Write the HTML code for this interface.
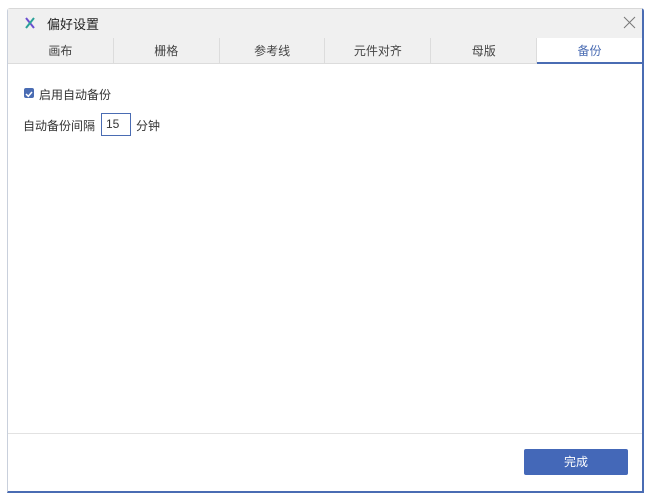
<!DOCTYPE html>
<html><head><meta charset="utf-8"><style>
body{margin:0;width:650px;height:495px;background:#fff;font-family:"Liberation Sans","Noto Sans CJK SC",sans-serif;font-size:12px;color:#333;position:relative;overflow:hidden}
.dlg{position:absolute;left:7px;top:8px;width:634px;height:482px;border-left:1px solid #c9d0dc;border-top:1px solid #d8d8d8;border-right:2px solid #4a6cb3;border-bottom:2px solid #4a6cb3;border-radius:3px 3px 0 0;background:#fff}
.title{position:absolute;left:0;top:0;width:634px;height:29px;background:#f0f0f0}
.title .t{position:absolute;left:39px;top:5px;font-size:13px;color:#222}
.logo{position:absolute;left:16px;top:8px}
.close{position:absolute;right:6px;top:7px}
.tabs{position:absolute;left:0;top:29px;width:634px;height:25px;background:#f0f0f0;border-bottom:1px solid #dcdcdc;display:flex}
.tab{flex:1;text-align:center;line-height:27px;border-right:1px solid #dcdcdc;color:#444;font-size:12px}
.tab.a{background:#fff;color:#4a6cb3;border-bottom:2px solid #4a6cb3;border-right:none;height:24px}
.cb{position:absolute;left:16px;top:79px;width:10px;height:10px;background:#4a6cb3;border-radius:2px}
.foot{position:absolute;left:0;top:424px;width:634px;border-top:1px solid #e2e2e2}
.btn{position:absolute;left:516px;top:440px;width:104px;height:26px;background:#4468b8;border-radius:2px;color:#fff;text-align:center;line-height:26px}
.inp{position:absolute;left:93px;top:104px;border:1px solid #4a6cb3;line-height:21px;padding-left:4px;box-sizing:border-box;width:30px;height:23px}
</style></head><body>
<div class="dlg">
<div class="title">
<svg class="logo" width="12" height="12"><path d="M2 1 L10 11" stroke="#6b4fd0" stroke-width="2"/><path d="M10 1 L2 11" stroke="#2aa198" stroke-width="2"/></svg>
<span class="t">偏好设置</span>
<svg class="close" width="13" height="13"><path d="M1 1L12 12M12 1L1 12" stroke="#777" stroke-width="1"/></svg></div>
<div class="tabs"><div class="tab">画布</div><div class="tab">栅格</div><div class="tab">参考线</div><div class="tab">元件对齐</div><div class="tab">母版</div><div class="tab a">备份</div></div>
<div class="cb"><svg width="10" height="10"><path d="M2 5 L4.3 7.3 L8 3" stroke="#fff" stroke-width="1.5" fill="none"/></svg></div>
<div style="position:absolute;left:31px;top:77px">启用自动备份</div>
<div style="position:absolute;left:15px;top:108px">自动备份间隔</div>
<div class="inp">15</div>
<div style="position:absolute;left:128px;top:108px">分钟</div>
<div class="foot"></div>
<div class="btn">完成</div>
</div>
</body></html>
